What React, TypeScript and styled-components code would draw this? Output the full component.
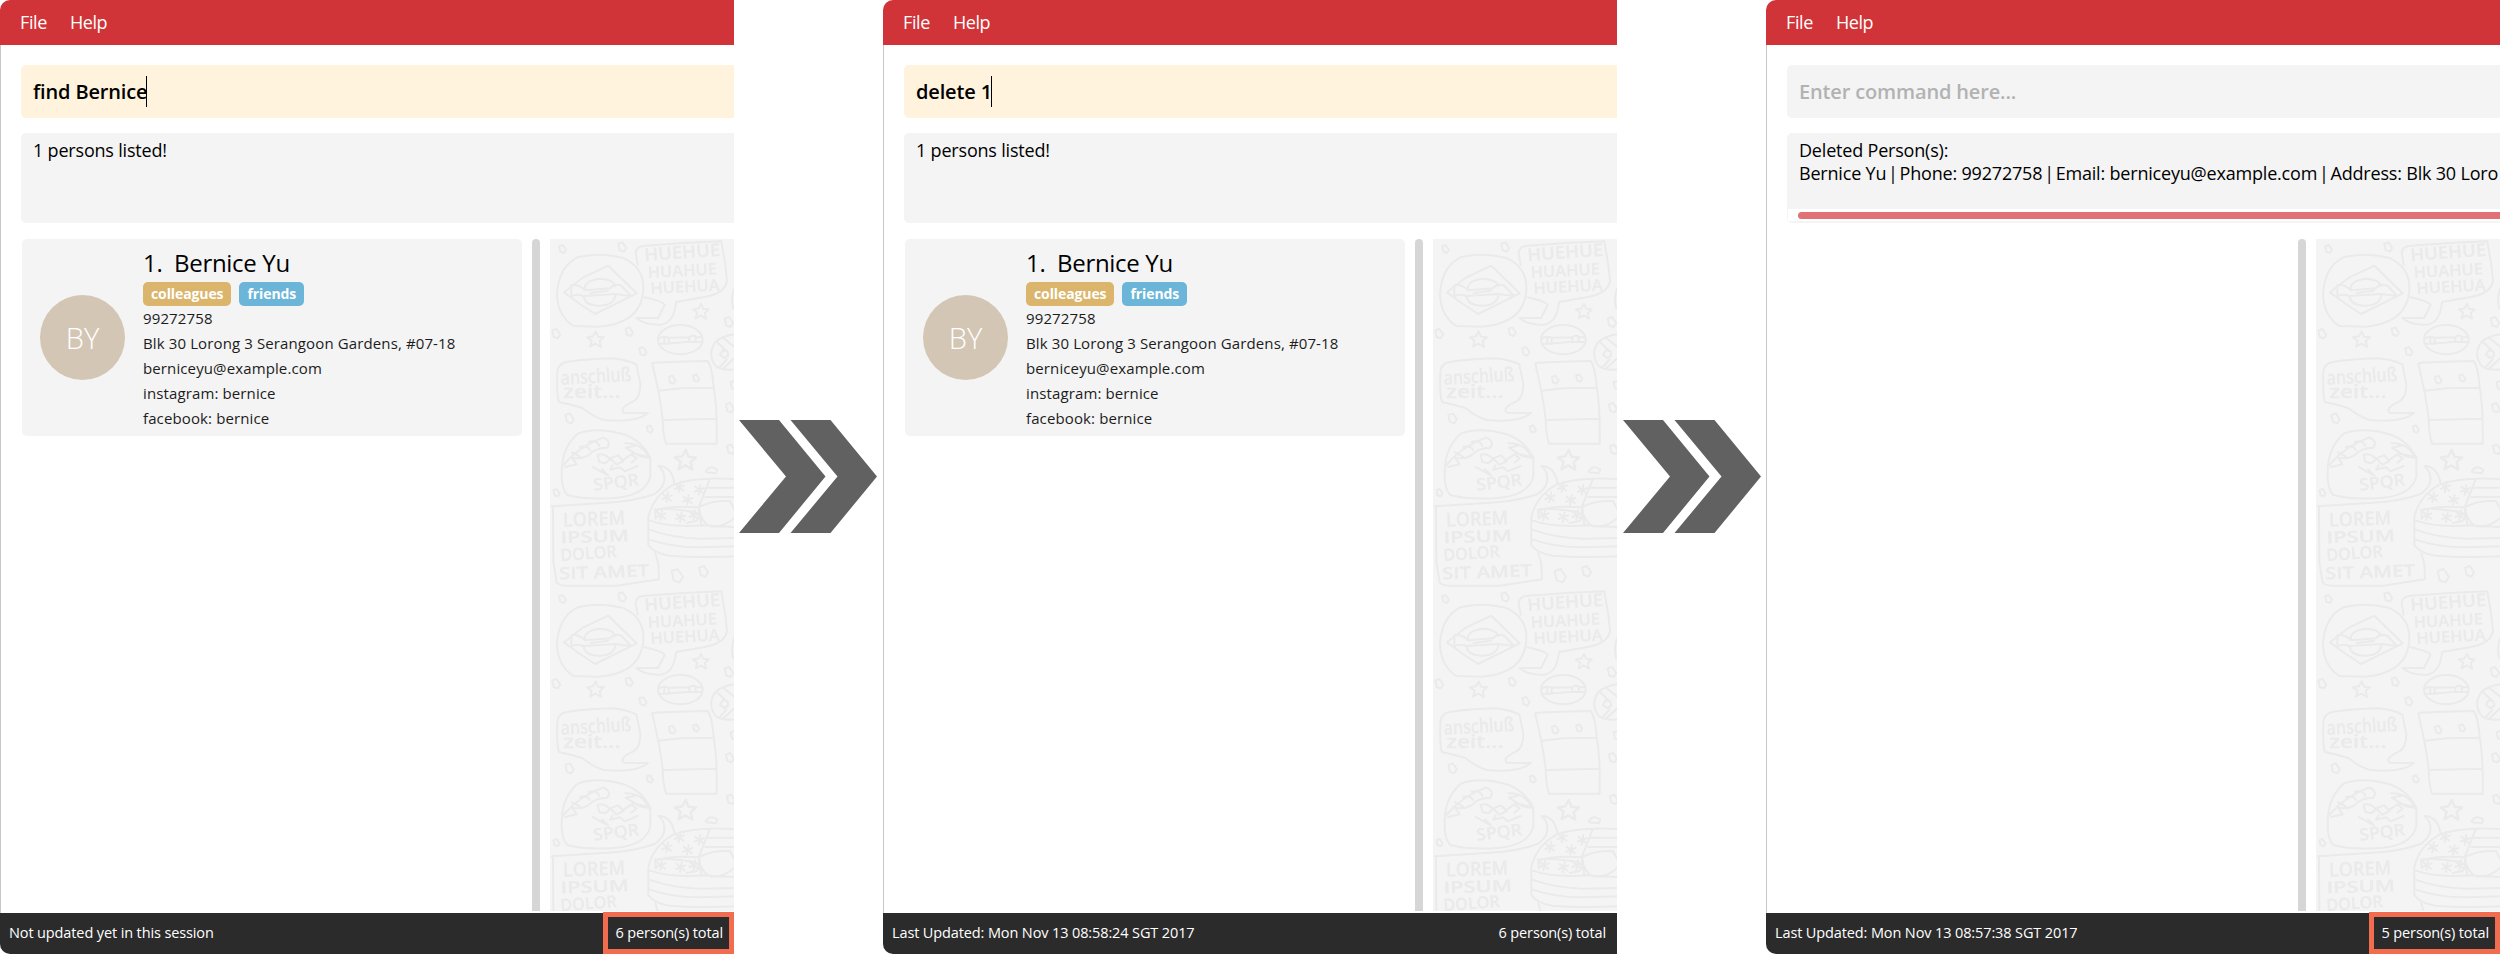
import React from "react";
import styled, { createGlobalStyle } from "styled-components";

const GlobalStyle = createGlobalStyle`
  * { box-sizing: border-box; }
  body {
    margin: 0;
    background: #fff;
    font-family: "Open Sans", "Noto Sans", sans-serif;
    color: #000;
  }
`;

const Page = styled.main`
  display: flex;
  width: 2500px;
  height: 954px;
  overflow: hidden;
`;

const Window = styled.section`
  display: flex;
  flex-direction: column;
  flex: none;
  width: 734px;
  height: 954px;
  border-radius: 10px 0 0 10px;
  overflow: hidden;
`;

const MenuBar = styled.nav`
  display: flex;
  gap: 23px;
  flex: none;
  height: 45px;
  padding-left: 20px;
  background: #d03438;
`;

const MenuItem = styled.span`
  font-size: 18px;
  line-height: 44px;
  letter-spacing: -0.4px;
  color: #fff;
`;

const Body = styled.div`
  display: flex;
  flex-direction: column;
  flex: 1;
  min-height: 0;
  padding: 20px 0 0 20px;
  border-left: 1px solid #c8c8c8;
`;

const CommandBox = styled.div<{ $active: boolean }>`
  display: flex;
  align-items: center;
  flex: none;
  height: 53px;
  padding-left: 12px;
  border-radius: 5px 0 0 5px;
  background: ${(p) => (p.$active ? "#fff3de" : "#f4f4f4")};
  color: ${(p) => (p.$active ? "#000" : "#b2b2b2")};
  font-size: 20px;
  font-weight: 600;
  letter-spacing: -0.15px;
  white-space: pre;
`;

const Caret = styled.span`
  width: 1px;
  height: 31px;
  margin-left: -1px;
  background: #000;
`;

const ResultBox = styled.div`
  display: flex;
  flex-direction: column;
  flex: none;
  height: 90px;
  margin-top: 15px;
  border-radius: 5px 0 0 5px;
  background: #f4f4f4;
  overflow: hidden;
`;

const ResultText = styled.div`
  flex: 1;
  padding: 6px 0 0 12px;
  font-size: 18px;
  line-height: 23px;
`;

const ResultLine = styled.div`
  letter-spacing: -0.19px;
  white-space: nowrap;
`;

const Bar = styled.span`
  margin: 0 -2.7px;
`;

const ScrollTrack = styled.div`
  flex: none;
  height: 12px;
  margin: 0 0 2px 1px;
  padding: 3px 0 2px 10px;
  background: #fff;
`;

const ScrollThumb = styled.div`
  height: 7px;
  border-radius: 4px 0 0 4px;
  background: #e07276;
`;

const Content = styled.div`
  display: flex;
  flex: 1;
  min-height: 0;
  margin-top: 16px;
  padding-bottom: 2px;
`;

const PersonList = styled.div`
  flex: none;
  width: 511px;
  padding-left: 1px;
`;

const Divider = styled.div`
  flex: none;
  width: 8px;
  border-radius: 4px 4px 0 0;
  background: #d6d6d6;
`;

const DoodlePanel = styled.div`
  flex: 1;
  margin-left: 10px;
  background: #f4f4f4;
  svg { display: block; }
`;

const Card = styled.article`
  display: flex;
  align-items: center;
  width: 500px;
  height: 197px;
  padding-left: 18px;
  border-radius: 5px;
  background: #f4f4f4;
`;

const Avatar = styled.div`
  display: flex;
  align-items: center;
  justify-content: center;
  width: 85px;
  height: 85px;
  margin-right: 18px;
  border-radius: 50%;
  background: #d4c6b5;
  color: #fff;
  font-size: 29px;
  font-weight: 300;
`;

const Details = styled.div`
  display: flex;
  flex-direction: column;
  padding-top: 2px;
`;

const Name = styled.h2`
  display: flex;
  margin: 0 0 3px;
  font-size: 24px;
  font-weight: 400;
  line-height: 33px;
  letter-spacing: -0.3px;
`;

const Index = styled.span`
  width: 31px;
`;

const Tags = styled.div`
  display: flex;
  gap: 8px;
`;

const Tag = styled.span<{ $color: string }>`
  height: 24px;
  padding: 0 8px;
  border-radius: 5px;
  background: ${(p) => p.$color};
  color: #fff;
  font-size: 14px;
  font-weight: 700;
  line-height: 23px;
  letter-spacing: -0.1px;
`;

const Field = styled.div`
  font-size: 15px;
  line-height: 25px;
  letter-spacing: 0.12px;
  color: #1c1c1c;
`;

const StatusBar = styled.footer`
  display: flex;
  justify-content: space-between;
  flex: none;
  height: 41px;
  padding-left: 9px;
  background: #2b2b2b;
  color: #fff;
  font-size: 14.5px;
  line-height: 40px;
  letter-spacing: -0.12px;
`;

const Total = styled.span<{ $highlight: boolean }>`
  display: flex;
  justify-content: flex-end;
  width: 131px;
  height: 42px;
  margin-top: -1px;
  padding-right: ${(p) => (p.$highlight ? "6px" : "11px")};
  border: ${(p) => (p.$highlight ? "5px solid #f26c4f" : "0 solid transparent")};
  line-height: ${(p) => (p.$highlight ? "32px" : "42px")};
`;

const Arrow = styled.div<{ $inset: number }>`
  display: flex;
  align-items: center;
  flex: none;
  width: 149px;
  padding: 0 0 1px ${(p) => p.$inset}px;
`;

const STAR = "M0 -24 L7 -8 L25 -6 L12 5 L16 23 L-1 13 L-17 22 L-12 4 L-26 -6 L-8 -9Z";
const DROPS: [number, number, number][] = [
  [97, 57, 12], [276, 51, 14], [78, 311, 14], [297, 305, 13], [338, 364, 13],
  [118, 565, 15], [359, 597, 11], [79, 788, 11], [596, 276, 15], [599, 533, 14],
  [602, 658, 14], [441, 1037, 20], [520, 1024, 16], [426, 449, 12], [498, 444, 11],
  [612, 466, 13],
];
const STARS: [number, number, number][] = [[197, 328, 1], [513, 244, 0.95], [467, 690, 1.25]];
const BURSTS: [number, number][] = [[448, 772], [508, 780], [411, 802], [473, 810], [393, 856], [452, 862], [492, 856]];

interface Lettering {
  text: string;
  size: number;
  x: number;
  y: number;
  length: number;
  tilt: number;
}

const LETTERING: Lettering[] = [
  { text: "HUEHUE", size: 52, x: 344, y: 93, length: 228, tilt: -4 },
  { text: "HUAHUE", size: 48, x: 354, y: 144, length: 208, tilt: -3 },
  { text: "HUEHUA", size: 48, x: 362, y: 192, length: 208, tilt: -3 },
  { text: "anschluß", size: 58, x: 93, y: 464, length: 212, tilt: -3 },
  { text: "zeit...", size: 54, x: 100, y: 504, length: 172, tilt: 0 },
  { text: "SPQR", size: 50, x: 192, y: 782, length: 138, tilt: -7 },
  { text: "LOREM", size: 58, x: 100, y: 890, length: 186, tilt: -2 },
  { text: "IPSUM", size: 48, x: 92, y: 940, length: 206, tilt: -2 },
  { text: "DOLOR", size: 50, x: 92, y: 993, length: 170, tilt: -4 },
  { text: "SIT AMET", size: 50, x: 88, y: 1048, length: 270, tilt: -2 },
];

function Doodles({ id }: { id: string }) {
  return (
    <svg width="184" height="672">
      <defs>
        <pattern id={id} width="200" height="350" patternUnits="userSpaceOnUse">
          <g
            transform="scale(0.33333) translate(-60 -27)"
            fill="none"
            stroke="#eaeaea"
            strokeWidth="6"
            strokeLinejoin="round"
            strokeLinecap="round"
          >
            <path d="M142 82 Q205 66 278 83 Q343 112 340 178 Q338 232 297 263 Q258 288 205 290 L130 288 Q84 258 81 195 Q84 112 142 82Z" />
            <path d="M102 187 L160 142 L235 107 L275 146 L320 190 L260 220 L195 252 L150 222Z" />
            <path d="M124 199 L124 166 Q147 162 165 181 L240 175 Q253 158 275 168 L303 198 L256 192 L160 198Q140 190 124 199 M165 180 Q160 153 207 146 Q252 148 254 168 M160 198 Q166 229 210 227 Q252 226 257 194 M182 189 L234 182" />
            <path d="M323 104 L317 70 Q318 48 345 47 L460 39 L574 34 L586 105 L591 153 Q584 192 520 202 L438 216 Q432 279 393 284 Q344 286 319 264 L384 264 L404 225 Q402 215 343 202" />
            <ellipse cx="451" cy="329" rx="67" ry="44" />
            <path d="M387 325 Q400 316 414 323 L478 322 Q490 312 499 322 H516 M387 341 H408 L478 335 L512 336 M403 322 V340 M416 323 V341 M478 321 V336 M497 320 V336" />
            <path d="M620 312 Q575 316 555 338 Q531 374 557 408 Q577 423 620 418 M563 338 L590 364 M581 325 L620 356 M567 414 L590 388 M578 417 L620 378 M578 361 L592 364 L595 377 L582 384 L570 374Z" />
            <path d="M620 160 Q600 190 609 235" />
            <path d="M82 425 Q85 401 110 396 Q170 387 245 385 Q286 388 319 403 L331 462 Q331 503 310 514 Q266 534 281 548 L354 549 Q318 579 221 570 Q190 561 157 534 Q120 523 87 516Q80 500 82 425Z" />
            <path d="M367 402 Q360 397 440 395 L533 393 Q546 409 551 472 Q562 530 560 641 H408 Q398 610 398 568 Q391 500 367 402Z M386 482 L452 475 L550 473 M402 570 L557 566" />
            <path d="M96 710 Q100 648 145 610 Q202 590 285 614 Q337 634 361 682 V740 Q346 795 260 803 Q170 811 112 795 Q91 775 96 710Z" />
            <path d="M100 705 Q145 650 220 622 Q246 634 232 653 Q195 653 175 676 Q150 690 126 682 L140 703 L105 711 M126 667 L150 680 M150 651 Q169 644 180 660 M176 635 Q202 629 208 648 M286 640 Q335 638 358 684 L330 679 L287 653 L315 647 M308 670 L357 681" />
            <path d="M188 711 L235 737 L216 718 M203 674 Q225 668 240 688 L226 700 L208 696Z M240 685 L264 676 L281 693 L259 704Z M281 689 L304 673 L320 685 L304 698 M248 706 L240 719 L270 712 L284 724 L323 708" />
            <path d="M65 829 L230 818 Q310 815 374 792 Q410 767 402 735 Q399 719 385 708 Q425 708 434 762" />
            <path d="M69 828 L70 995 L80 1057 Q86 1069 130 1067 H260 L387 1048 L385 1002 L376 970" />
            <path d="M355 862 Q368 800 430 764 Q500 739 620 748 M355 862 V945 Q370 969 418 977 Q500 984 620 979 M360 872 Q420 893 520 886 L620 892 M358 899 Q430 925 510 926 L620 924 M359 929 Q430 953 510 952 L620 949 M375 842 Q420 825 506 832 L539 748 M376 837 L377 866 M531 773 H620 M526 801 H620 M506 832 Q550 808 600 814 L620 850 M508 836 Q510 870 537 888 Q580 897 620 857 M506 840 L515 888 M384 837 Q405 833 495 846 L509 858 L500 873 L470 879" />
            <path d="M527 723 Q541 703 562 719 L557 730 L529 727Z" />
            {STARS.map(([x, y, s]) => (
              <path key={x} d={STAR} transform={`translate(${x} ${y}) scale(${s})`} />
            ))}
            {DROPS.map(([x, y, r]) => (
              <path
                key={`${x}-${y}`}
                d={`M${x - r * 0.8} ${y - r * 0.7} L${x + r * 0.1} ${y - r} L${x + r * 0.9} ${y + r * 0.2} L${x + r * 0.4} ${y + r} L${x - r * 0.5} ${y + r * 0.7}Z`}
              />
            ))}
            {BURSTS.map(([x, y]) => (
              <path
                key={x}
                d={`M${x - 12} ${y - 10} L${x + 12} ${y + 10} M${x + 3} ${y - 15} L${x - 2} ${y + 14} M${x - 14} ${y + 5} L${x + 14} ${y - 6}`}
              />
            ))}
            <g fill="#eaeaea" strokeWidth="1" fontFamily="Open Sans, sans-serif" fontWeight="600">
              {LETTERING.map(({ text, size, x, y, length, tilt }) => (
                <text
                  key={text}
                  x={x}
                  y={y}
                  fontSize={size}
                  textLength={length}
                  lengthAdjust="spacingAndGlyphs"
                  transform={`rotate(${tilt} ${x} ${y})`}
                >
                  {text}
                </text>
              ))}
            </g>
          </g>
        </pattern>
      </defs>
      <rect width="184" height="672" fill={`url(#${id})`} />
    </svg>
  );
}

function PersonCard() {
  return (
    <Card>
      <Avatar>BY</Avatar>
      <Details>
        <Name>
          <Index>1.</Index>Bernice Yu
        </Name>
        <Tags>
          <Tag $color="#dab56b">colleagues</Tag>
          <Tag $color="#6bb5d9">friends</Tag>
        </Tags>
        <Field>99272758</Field>
        <Field>Blk 30 Lorong 3 Serangoon Gardens, #07-18</Field>
        <Field>berniceyu@example.com</Field>
        <Field>instagram: bernice</Field>
        <Field>facebook: bernice</Field>
      </Details>
    </Card>
  );
}

function Chevrons({ inset }: { inset: number }) {
  return (
    <Arrow $inset={inset}>
      <svg width="139" height="113" viewBox="0 0 139 113" fill="#616161">
        <path d="M0 0H40L86.5 56.5L40 113H0L47 56.5Z M51.5 0H91.5L138 56.5L91.5 113H51.5L98.5 56.5Z" />
      </svg>
    </Arrow>
  );
}

interface AppWindowProps {
  id: string;
  command?: string;
  result: string[];
  showPerson?: boolean;
  status: string;
  total: string;
  highlight?: boolean;
}

function AppWindow({ id, command, result, showPerson = false, status, total, highlight = false }: AppWindowProps) {
  return (
    <Window>
      <MenuBar>
        <MenuItem>File</MenuItem>
        <MenuItem>Help</MenuItem>
      </MenuBar>
      <Body>
        <CommandBox $active={!!command}>
          {command || "Enter command here..."}
          {command && <Caret />}
        </CommandBox>
        <ResultBox>
          <ResultText>
            {result.map((line) => (
              <ResultLine key={line}>
                {line.split("|").map((part, i) => (
                  <React.Fragment key={part}>
                    {i > 0 && <Bar>|</Bar>}
                    {part}
                  </React.Fragment>
                ))}
              </ResultLine>
            ))}
          </ResultText>
          {result.length > 1 && (
            <ScrollTrack>
              <ScrollThumb />
            </ScrollTrack>
          )}
        </ResultBox>
        <Content>
          <PersonList>{showPerson && <PersonCard />}</PersonList>
          <Divider />
          <DoodlePanel>
            <Doodles id={id} />
          </DoodlePanel>
        </Content>
      </Body>
      <StatusBar>
        <span>{status}</span>
        <Total $highlight={highlight}>{total}</Total>
      </StatusBar>
    </Window>
  );
}

export default function App() {
  return (
    <>
      <GlobalStyle />
      <Page>
        <AppWindow
          id="doodles-find"
          command="find Bernice"
          result={["1 persons listed!"]}
          showPerson
          status="Not updated yet in this session"
          total="6 person(s) total"
          highlight
        />
        <Chevrons inset={5} />
        <AppWindow
          id="doodles-delete"
          command="delete 1"
          result={["1 persons listed!"]}
          showPerson
          status="Last Updated: Mon Nov 13 08:58:24 SGT 2017"
          total="6 person(s) total"
        />
        <Chevrons inset={6} />
        <AppWindow
          id="doodles-deleted"
          result={[
            "Deleted Person(s):",
            "Bernice Yu | Phone: 99272758 | Email: berniceyu@example.com | Address: Blk 30 Loro",
          ]}
          status="Last Updated: Mon Nov 13 08:57:38 SGT 2017"
          total="5 person(s) total"
          highlight
        />
      </Page>
    </>
  );
}
